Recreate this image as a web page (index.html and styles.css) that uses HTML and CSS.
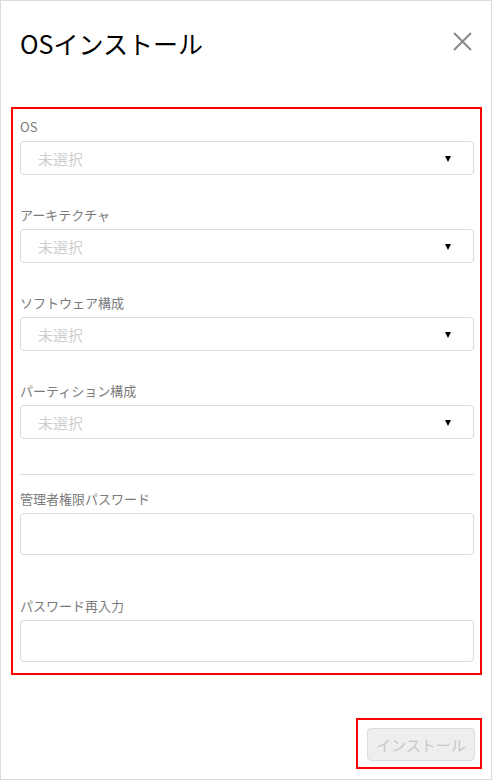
FILE: index.html
```html
<!DOCTYPE html>
<html lang="ja">
<head>
<meta charset="utf-8">
<title>OSインストール</title>
<link rel="stylesheet" href="styles.css">
</head>
<body>
<div class="dialog">
  <header class="dialog-header">
    <h1 class="dialog-title">OSインストール</h1>
    <button class="close-btn" aria-label="閉じる">
      <svg width="19" height="19" viewBox="0 0 19 19"><path d="M1 1L18 18M18 1L1 18" stroke="#8a8a8a" stroke-width="2" fill="none"/></svg>
    </button>
  </header>
  <form class="form-box">
    <div class="field select-field">
      <label class="field-label">OS</label>
      <div class="select"><span class="placeholder">未選択</span><span class="caret"></span></div>
    </div>
    <div class="field select-field">
      <label class="field-label">アーキテクチャ</label>
      <div class="select"><span class="placeholder">未選択</span><span class="caret"></span></div>
    </div>
    <div class="field select-field">
      <label class="field-label">ソフトウェア構成</label>
      <div class="select"><span class="placeholder">未選択</span><span class="caret"></span></div>
    </div>
    <div class="field select-field last">
      <label class="field-label">パーティション構成</label>
      <div class="select"><span class="placeholder">未選択</span><span class="caret"></span></div>
    </div>
    <hr class="divider">
    <div class="field input-field">
      <label class="field-label">管理者権限パスワード</label>
      <input class="text-input" type="password">
    </div>
    <div class="field input-field last">
      <label class="field-label">パスワード再入力</label>
      <input class="text-input" type="password">
    </div>
  </form>
  <footer class="dialog-footer">
    <div class="footer-box">
      <button class="install-btn" disabled>インストール</button>
    </div>
  </footer>
</div>
</body>
</html>
```

FILE: styles.css
```css
* { box-sizing: border-box; }
html, body { margin: 0; padding: 0; background: #fff; }
body {
  font-family: "Noto Sans CJK JP", "Noto Sans", sans-serif;
  color: #111;
}
.dialog {
  width: 492px;
  height: 780px;
  border: 1px solid #dcdcdc;
  display: flex;
  flex-direction: column;
}
.dialog-header {
  height: 106px;
  display: flex;
  align-items: flex-start;
  justify-content: space-between;
  padding: 26px 19px 0 19px;
}
.dialog-title {
  margin: 0;
  font-size: 25px;
  line-height: 32px;
  font-weight: 400;
  color: #000;
}
.close-btn {
  margin: 5px 0 0 0;
  padding: 0;
  border: 0;
  background: none;
  width: 19px;
  height: 19px;
  display: block;
}
.close-btn svg { display: block; }
.form-box {
  margin: 0 9px 0 10px;
  border: 2px solid #f00;
  padding: 8px 6px 11px 7px;
  display: flex;
  flex-direction: column;
}
.field { display: flex; flex-direction: column; }
.field-label {
  font-size: 13px;
  line-height: 20px;
  color: #7a7a7a;
  margin-bottom: 4px;
}
.select-field { margin-bottom: 30px; }
.select-field.last { margin-bottom: 0; }
.select {
  height: 34px;
  border: 1px solid #dadada;
  border-radius: 4px;
  display: flex;
  align-items: center;
  justify-content: space-between;
  padding: 0 22px 0 17px;
}
.placeholder {
  font-size: 15px;
  color: #cfcfcf;
}
.caret {
  width: 0;
  height: 0;
  border-left: 3.5px solid transparent;
  border-right: 3.5px solid transparent;
  border-top: 6px solid #000;
  margin-top: 2px;
}
.divider {
  margin: 35px 0 14px 0;
  border: 0;
  border-top: 1px solid #dadada;
  height: 0;
}
.input-field { margin-bottom: 41px; }
.input-field.last { margin-bottom: 0; }
.text-input {
  height: 42px;
  border: 1px solid #dadada;
  border-radius: 4px;
  background: #fff;
  font-size: 14px;
  padding: 0 10px;
  outline: none;
}
.dialog-footer {
  margin-top: 43px;
  display: flex;
  justify-content: flex-end;
  padding-right: 9px;
}
.footer-box {
  border: 2px solid #f00;
  padding: 8px 5px 6px 9px;
}
.install-btn {
  width: 108px;
  height: 33px;
  background: #eeeeee;
  border: 1px solid #dcdcdc;
  border-radius: 4px;
  color: #c8c8c8;
  font-family: "Noto Sans CJK JP", sans-serif;
  font-size: 15px;
  padding: 0;
  display: block;
}
```
